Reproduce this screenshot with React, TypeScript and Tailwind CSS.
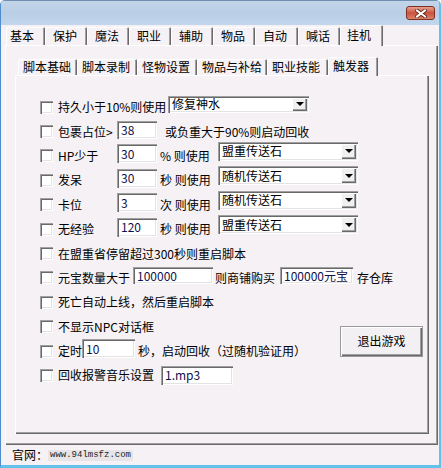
const sunken =
  "shadow-[inset_1px_1px_0_#a0a0a0,inset_2px_2px_0_#696969,inset_-1px_-1px_0_#ffffff,inset_-2px_-2px_0_#e3e3e3]";
const raised =
  "shadow-[inset_1px_1px_0_#ffffff,inset_-1px_-1px_0_#696969,inset_-2px_-2px_0_#a0a0a0]";
const tabEdge =
  "shadow-[inset_1px_1px_0_#ffffff,inset_-1px_0_0_#696969,inset_-2px_0_0_#a0a0a0]";

function Check() {
  return <span className={`w-[13px] h-[13px] shrink-0 bg-white mr-[5px] ${sunken}`} />;
}

function Field({ className, text }: { className: string; text: string }) {
  return (
    <span className={`${className} shrink-0 bg-white flex items-center pl-[4px] text-[#10104a] ${sunken}`}>
      {text}
    </span>
  );
}

function Combo({ className, text }: { className: string; text: string }) {
  return (
    <span className={`${className} shrink-0 bg-white flex items-stretch p-[2px] ${sunken}`}>
      <span className="flex-1 flex items-center pl-[2px]">{text}</span>
      <span className={`w-[15px] flex items-center justify-center bg-[#f0f0f0] ${raised}`}>
        <span className="w-0 h-0 border-x-[4px] border-x-transparent border-t-[4px] border-t-black" />
      </span>
    </span>
  );
}

function Row({ children }: { children: React.ReactNode }) {
  return <div className="flex items-center h-[24.4px] whitespace-nowrap">{children}</div>;
}

const outerTabs = [
  { label: "基本", w: "w-[39px] pl-[4px]" },
  { label: "保护", w: "w-[42px] pl-[8px]" },
  { label: "魔法", w: "w-[42px] pl-[8px]" },
  { label: "职业", w: "w-[42px] pl-[8px]" },
  { label: "辅助", w: "w-[42px] pl-[8px]" },
  { label: "物品", w: "w-[42px] pl-[8px]" },
  { label: "自动", w: "w-[43px] pl-[8px]" },
  { label: "喊话", w: "w-[42px] pl-[8px]" },
];

const innerTabs = [
  { label: "脚本基础", w: "w-[59px]" },
  { label: "脚本录制", w: "w-[60px]" },
  { label: "怪物设置", w: "w-[60px]" },
  { label: "物品与补给", w: "w-[70px]" },
  { label: "职业技能", w: "w-[61px]" },
];

const teleports = [
  { name: "HP少于", value: "30", unit: "% 则使用", item: "盟重传送石" },
  { name: "发呆", value: "30", unit: "秒 则使用", item: "随机传送石" },
  { name: "卡位", value: "3", unit: "次 则使用", item: "随机传送石" },
  { name: "无经验", value: "120", unit: "秒 则使用", item: "盟重传送石" },
];

export default function App() {
  return (
    <div className="w-[441px] h-[468px] flex flex-col bg-[#f5f1f5] border-l border-l-[#4f8ccc] border-r-2 border-r-[#62c2ea] border-b-[3px] border-b-[#62c2ea] rounded-t-[5px] overflow-hidden font-['Noto_Sans_CJK_SC','Noto_Sans',sans-serif] text-[12px] leading-[16px] text-black">
      {/* title bar */}
      <div className="h-[25px] shrink-0 flex justify-end items-start pt-[5px] pr-[4px] bg-gradient-to-b from-[#c3d4e8] via-[#b9cee6] to-[#c2d7ed] border-t border-t-[#6f8fb5]">
        <span className="w-[29px] h-[14px] rounded-[3px] border border-[#7e2f22] bg-gradient-to-b from-[#e6a192] via-[#c9523c] to-[#d9826a] flex items-center justify-center">
          <svg width="12" height="9" viewBox="0 0 12 9">
            <path d="M2 1.5 L10 7.5 M10 1.5 L2 7.5" stroke="#5a2018" strokeWidth="3.6" strokeLinecap="square" />
            <path d="M2 1.5 L10 7.5 M10 1.5 L2 7.5" stroke="#ffffff" strokeWidth="2" strokeLinecap="square" />
          </svg>
        </span>
      </div>

      {/* outer tabs */}
      <div className="h-[20px] shrink-0 flex items-end pl-[5px]">
        {outerTabs.map((t) => (
          <span key={t.label} className={`${t.w} h-[18px] flex items-center rounded-t-[2px] ${tabEdge}`}>
            {t.label}
          </span>
        ))}
        <span className={`w-[43px] h-[21px] -mb-px relative z-10 bg-[#f5f1f5] flex items-center pl-[7px] pb-[2px] rounded-t-[2px] ${tabEdge}`}>
          挂机
        </span>
      </div>

      {/* outer panel */}
      <div className={`ml-[4px] w-[433px] h-[400px] shrink-0 flex flex-col pt-[12px] ${raised}`}>
        <div className="h-[18px] shrink-0 flex items-end pl-[13px]">
          {innerTabs.map((t) => (
            <span key={t.label} className={`${t.w} h-[16px] flex items-center pl-[5px] rounded-t-[2px] ${tabEdge}`}>
              {t.label}
            </span>
          ))}
          <span className={`w-[50px] h-[19px] -mb-px relative z-10 bg-[#f5f1f5] flex items-center pl-[5px] pb-[1px] rounded-t-[2px] ${tabEdge}`}>
            触发器
          </span>
        </div>

        <div className={`ml-[10px] w-[414px] h-[359px] flex flex-col pt-[20px] pl-[25px] pr-[6px] ${raised}`}>
          <Row>
            <Check />
            <span className="w-[110px]">持久小于10%则使用</span>
            <Combo className="w-[141px] h-[17px] mb-[6px]" text="修复神水" />
          </Row>
          <Row>
            <Check />
            <span className="w-[59px]">包裹占位&gt;</span>
            <Field className="w-[40px] h-[18px] mb-[3px]" text="38" />
            <span className="ml-[8px]">或负重大于90%则启动回收</span>
          </Row>
          {teleports.map((r) => (
            <Row key={r.name}>
              <Check />
              <span className="w-[59px]">{r.name}</span>
              <Field className="w-[40px] h-[19px] mb-[4px]" text={r.value} />
              <span className="ml-[3px] w-[58px]">{r.unit}</span>
              <Combo className="w-[140px] h-[19px] mb-[9px]" text={r.item} />
            </Row>
          ))}
          <Row>
            <Check />
            <span>在盟重省停留超过300秒则重启脚本</span>
          </Row>
          <Row>
            <Check />
            <span className="w-[75px]">元宝数量大于</span>
            <Field className="w-[80px] h-[17px] mb-[4px]" text="100000" />
            <span className="ml-[2px] w-[65px]">则商铺购买</span>
            <Field className="w-[73px] h-[17px] mb-[4px]" text="100000元宝" />
            <span className="ml-[4px]">存仓库</span>
          </Row>
          <Row>
            <Check />
            <span>死亡自动上线，然后重启脚本</span>
          </Row>
          <div className="flex items-start">
            <div className="flex-1 flex flex-col">
              <Row>
                <Check />
                <span>不显示NPC对话框</span>
              </Row>
              <Row>
                <Check />
                <span className="w-[24px]">定时</span>
                <Field className="w-[53px] h-[19px] mb-[5px]" text="10" />
                <span className="ml-[3px]">秒，启动回收（过随机验证用）</span>
              </Row>
            </div>
            <button className={`mt-[11px] w-[83px] h-[31px] bg-[#f3f0f3] flex items-center justify-center border border-[#9a9a9a] ${raised}`}>
              退出游戏
            </button>
          </div>
          <Row>
            <Check />
            <span className="w-[103px]">回收报警音乐设置</span>
            <Field className="w-[72px] h-[19px]" text="1.mp3" />
          </Row>
        </div>
      </div>

      {/* footer */}
      <div className="h-[20px] shrink-0 flex items-center pl-[11px]">
        <span className="w-[36px]">官网：</span>
        <span className="bg-[#e8e5e8] h-[11px] px-[2px] flex items-center font-['Liberation_Mono',monospace] text-[9px] text-[#222]">
          www.94lmsfz.com
        </span>
      </div>
    </div>
  );
}
